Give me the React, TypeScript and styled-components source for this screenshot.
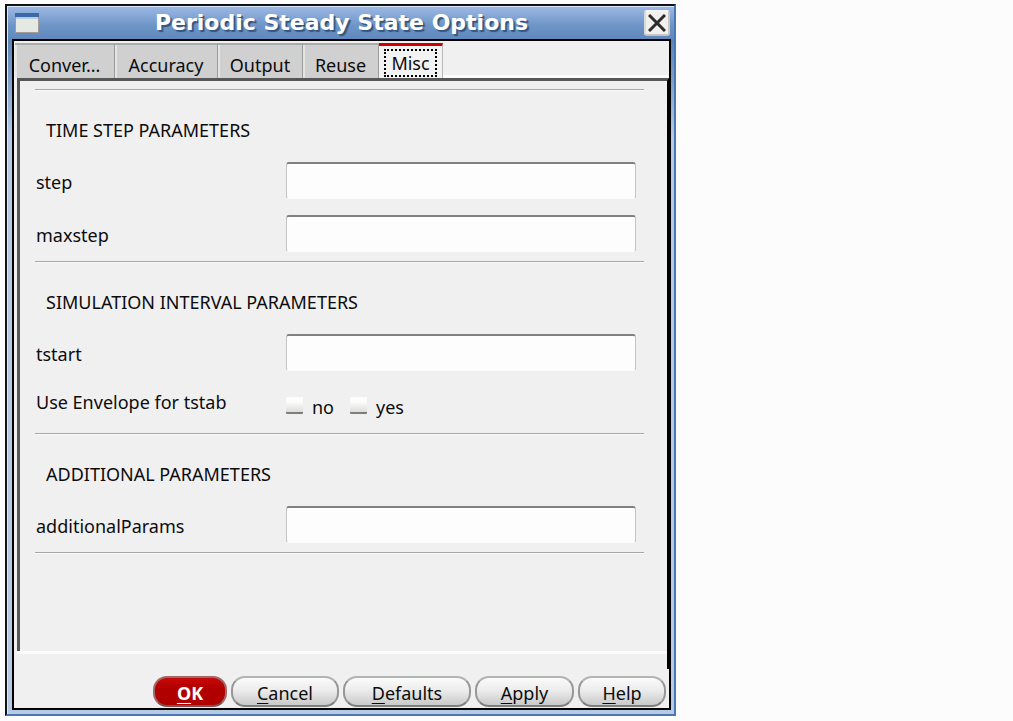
import React from "react";
import styled, { createGlobalStyle, css } from "styled-components";

const GlobalStyle = createGlobalStyle`
  *, *::before, *::after { box-sizing: border-box; }
  body {
    margin: 0;
    background: #fcfcfc;
    color: #0c0c0c;
    font-family: "Noto Sans", "Open Sans", sans-serif;
    font-size: 18px;
    line-height: 24px;
  }
`;

const Page = styled.main`
  padding: 4px 5px;
`;

const Dialog = styled.section`
  max-width: 671px;
  border: 2px solid #101418;
  border-right: 2px solid #4a78b4;
  border-bottom: 2px solid #4a78b4;
  background: linear-gradient(to bottom, #9ebae6 0, #6d94c6 20px, #5c86bb 36px, #7a9cc8 70px, #b6cae6 130px);
  box-shadow: inset 1px 1px 0 #dce8fa;
  padding: 0 3px 4px 5px;
`;

const TitleBar = styled.header`
  display: flex;
  align-items: center;
  height: 33px;
  padding: 0 1px 0 3px;
`;

const Title = styled.h1`
  flex: 1;
  margin: 0;
  text-align: center;
  color: #ffffff;
  font: bold 22px/28px "DejaVu Sans", sans-serif;
  text-shadow: 2px 2px 1px #34557f;
`;

const CloseButton = styled.button`
  display: flex;
  align-items: center;
  justify-content: center;
  width: 26px;
  height: 26px;
  padding: 0;
  border: 2px solid #c9c6c2;
  border-top-color: #f4f4f4;
  border-left-color: #dcdad6;
  border-radius: 3px;
  background: #f1f0ee;
`;

const Body = styled.div`
  border: 2px solid #000000;
  background: #f1f0f1;
  padding: 2px 0 1px 1px;
`;

const TabBar = styled.div`
  display: flex;
  align-items: stretch;
  height: 35px;
  box-shadow: inset 0 -3px 0 #fcfcfc;
`;

const Tab = styled.button<{ $active?: boolean; $width: number }>`
  width: ${(p) => p.$width}px;
  border: 0;
  border-top: 2px solid #a9aba9;
  border-right: 1px solid #9a9c9a;
  background: linear-gradient(to right, #e4e4e4 0, #e4e4e4 2px, #d0d0d1 2px);
  padding: 6px 0 0;
  color: inherit;
  font: inherit;
  line-height: 24px;
  white-space: nowrap;
  ${(p) =>
    p.$active &&
    css`
      border-top: 3px solid #cc0000;
      border-right: 1px solid #b8b8b8;
      background: #f4f3f4;
      padding: 2px 5px 1px;
    `}
`;

const FocusFrame = styled.span`
  display: block;
  border: 2px dotted #000000;
  line-height: 24px;
`;

const Panel = styled.div`
  margin: 0 0 0 2px;
  border: 3px solid #565656;
  border-right: 2px solid #000000;
  border-bottom: 0;
  padding: 8px 23px 14px 15px;
`;

const Group = styled.section`
  border-top: 1px solid #a8a4a8;
  box-shadow: inset 0 1px 0 #fafafa;
  padding: 1px 0 9px;
`;

const GroupTitle = styled.h2`
  margin: 0;
  padding: 27px 0 20px 11px;
  font-size: 18px;
  font-weight: 400;
  line-height: 24px;
`;

const Rows = styled.div`
  display: grid;
  gap: 16px;
`;

const Row = styled.div`
  display: grid;
  grid-template-columns: 251px 1fr;
  align-items: center;
  height: 37px;
  padding-right: 8px;
`;

const RowLabel = styled.label<{ $top?: boolean }>`
  align-self: ${(p) => (p.$top ? "start" : "center")};
  padding: 3px 0 0 1px;
`;

const CheckGroup = styled.div`
  display: flex;
  gap: 16px;
`;

const CheckLabel = styled.label`
  display: flex;
  align-items: center;
  gap: 9px;
`;

const CheckText = styled.span`
  padding-top: 3px;
`;

const CheckBox = styled.input`
  appearance: none;
  width: 17px;
  height: 17px;
  margin: 0;
  border: 0;
  border-bottom: 2px solid #7c7e7c;
  border-radius: 1px;
  background: linear-gradient(to bottom, #fdfdfd 30%, #dcdedb);
`;

const TextBox = styled.input`
  width: 100%;
  height: 37px;
  border: 1px solid #c4c4c4;
  border-top: 2px solid #808080;
  border-bottom: 1px solid #fcfcfc;
  border-radius: 3px;
  background: #fdfdfd;
  padding: 0 8px;
  font: inherit;
`;

const Blank = styled.div`
  height: 85px;
  border-top: 1px solid #a8a4a8;
  box-shadow: inset 0 1px 0 #fafafa;
`;

const PanelEdge = styled.div`
  height: 18px;
  margin-left: 2px;
  border-right: 2px solid #000000;
  box-shadow: inset 0 3px 0 #fbfbfb;
`;

const Footer = styled.footer`
  display: flex;
  justify-content: flex-end;
  gap: 4px;
  padding: 7px 3px 0 0;
`;

const ActionButton = styled.button<{ $primary?: boolean; $width: number }>`
  width: ${(p) => p.$width}px;
  height: 31px;
  border: 2px solid #969896;
  border-top-color: #b2b4b2;
  border-bottom-color: #7c7e7c;
  border-radius: 14px;
  background: linear-gradient(to bottom, #fbfbfb 0, #ececec 45%, #c8cac8 100%);
  color: #0c0c0c;
  padding: 3px 0 0;
  font: inherit;
  line-height: 24px;
  ${(p) =>
    p.$primary &&
    css`
      border-color: #a06868;
      border-bottom-color: #7c5454;
      background: linear-gradient(to bottom, #c80808 0, #b00000 40%, #b00000 100%);
      color: #ffffff;
      font-weight: 700;
    `}
`;

const Mnemonic = styled.span`
  text-decoration: underline;
  text-decoration-thickness: 1px;
  text-underline-offset: 3px;
`;

const WindowIcon = () => (
  <svg width="24" height="20" viewBox="0 0 24 20" aria-hidden="true">
    <rect x="0.5" y="0.5" width="23" height="19" fill="#e6e8e2" stroke="#a09c98" />
    <rect x="0" y="0" width="24" height="4" fill="#3c68a8" />
    <rect x="1" y="4" width="22" height="2" fill="#b8cce0" />
  </svg>
);

const CloseIcon = () => (
  <svg width="18" height="18" viewBox="0 0 18 18" aria-hidden="true">
    <path d="M1 1L17 17M17 1L1 17" stroke="#2c2c2c" strokeWidth="3" fill="none" />
  </svg>
);

const TABS = [
  { label: "Conver...", width: 100 },
  { label: "Accuracy", width: 103 },
  { label: "Output", width: 85 },
  { label: "Reuse", width: 76 },
  { label: "Misc", width: 64, active: true },
];

const ACTIONS = [
  { label: "OK", width: 74, primary: true },
  { label: "Cancel", width: 108 },
  { label: "Defaults", width: 128 },
  { label: "Apply", width: 99 },
  { label: "Help", width: 88 },
];

const Field = ({ name }: { name: string }) => (
  <Row>
    <RowLabel htmlFor={name}>{name}</RowLabel>
    <TextBox id={name} type="text" />
  </Row>
);

export default function App() {
  return (
    <>
      <GlobalStyle />
      <Page>
        <Dialog>
          <TitleBar>
            <WindowIcon />
            <Title>Periodic Steady State Options</Title>
            <CloseButton aria-label="Close">
              <CloseIcon />
            </CloseButton>
          </TitleBar>
          <Body>
            <TabBar role="tablist">
              {TABS.map((t) => (
                <Tab key={t.label} role="tab" aria-selected={!!t.active} $active={t.active} $width={t.width}>
                  {t.active ? <FocusFrame>{t.label}</FocusFrame> : t.label}
                </Tab>
              ))}
            </TabBar>
            <Panel role="tabpanel">
              <Group>
                <GroupTitle>TIME STEP PARAMETERS</GroupTitle>
                <Rows>
                  <Field name="step" />
                  <Field name="maxstep" />
                </Rows>
              </Group>
              <Group>
                <GroupTitle>SIMULATION INTERVAL PARAMETERS</GroupTitle>
                <Rows>
                  <Field name="tstart" />
                  <Row role="group" aria-labelledby="envelope">
                    <RowLabel as="span" id="envelope" $top>
                      Use Envelope for tstab
                    </RowLabel>
                    <CheckGroup>
                      <CheckLabel>
                        <CheckBox type="checkbox" />
                        <CheckText>no</CheckText>
                      </CheckLabel>
                      <CheckLabel>
                        <CheckBox type="checkbox" />
                        <CheckText>yes</CheckText>
                      </CheckLabel>
                    </CheckGroup>
                  </Row>
                </Rows>
              </Group>
              <Group>
                <GroupTitle>ADDITIONAL PARAMETERS</GroupTitle>
                <Rows>
                  <Field name="additionalParams" />
                </Rows>
              </Group>
              <Blank />
            </Panel>
            <PanelEdge />
            <Footer>
              {ACTIONS.map((a) => (
                <ActionButton key={a.label} $primary={a.primary} $width={a.width}>
                  <Mnemonic>{a.label[0]}</Mnemonic>
                  {a.label.slice(1)}
                </ActionButton>
              ))}
            </Footer>
          </Body>
        </Dialog>
      </Page>
    </>
  );
}
